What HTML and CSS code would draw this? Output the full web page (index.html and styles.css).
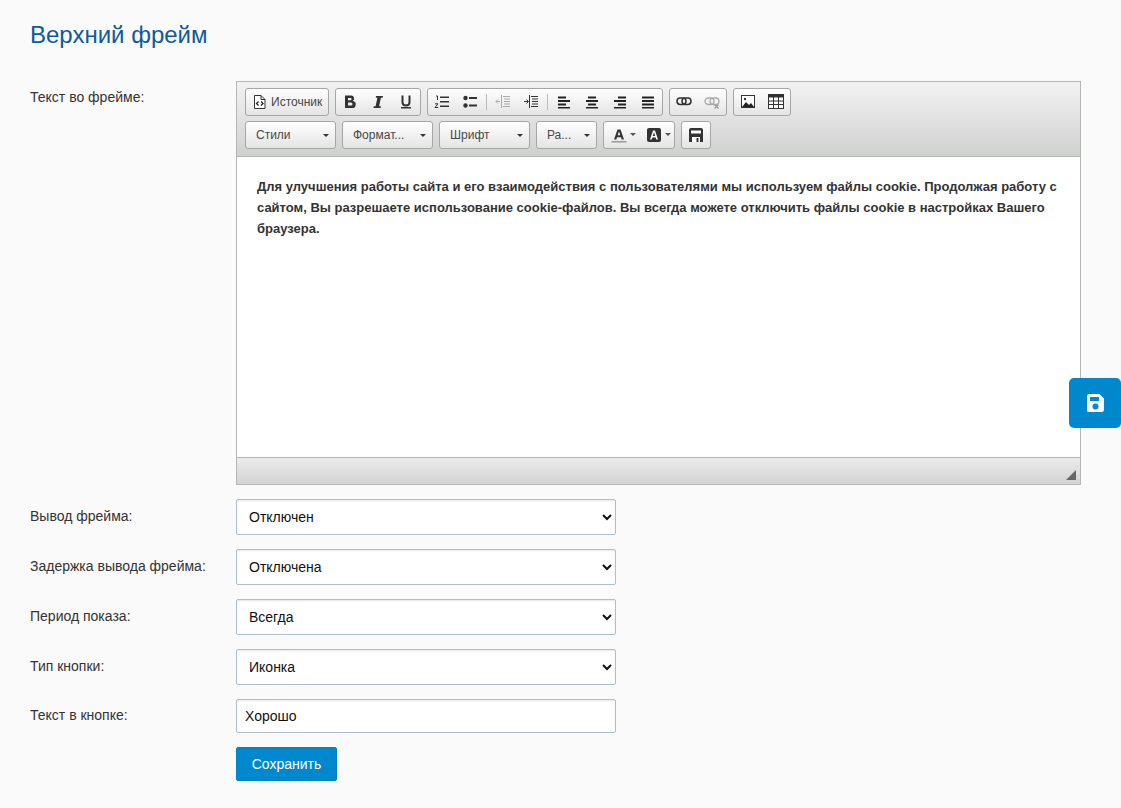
FILE: index.html
```html
<!DOCTYPE html>
<html lang="ru">
<head>
    <meta charset="UTF-8">
    <meta name="viewport" content="width=device-width, initial-scale=1.0">
    <title>Верхний фрейм</title>
    <link rel="stylesheet" href="styles.css">
</head>
<body>
    <h1>Верхний фрейм</h1>
    <form class="settings">
        <div class="row row-editor">
            <label>Текст во фрейме:</label>
            <div class="editor">
                <div class="toolbar">
                    <div class="tool-line">
                        <div class="group">
                            <span class="btn btn-source">
                                <svg width="16" height="16" viewBox="0 0 16 16"><path d="M2.500 1.500h6.500l4 4v9h-10.500z" fill="#fff" stroke="#333"/><path d="M9 1.500v4h4" fill="none" stroke="#333"/><path d="M6.500 7.500l-2 2 2 2M9 7.500l2 2-2 2" fill="none" stroke="#222" stroke-width="1.300"/></svg>
                                Источник
                            </span>
                        </div>
                        <div class="group">
                            <span class="btn"><svg width="16" height="16" viewBox="0 0 16 16"><path d="M3 1.500h6a3 3 0 0 1 1.800 5.500A3.400 3.400 0 0 1 9.500 14H3zM6 4v2.200h2.500a1.100 1.100 0 0 0 0-2.200zM6 8.500v3h3a1.500 1.500 0 0 0 0-3z" fill="#333" fill-rule="evenodd"/></svg></span>
                            <span class="btn"><svg width="16" height="16" viewBox="0 0 16 16"><path d="M6 2h7l-.3 1.700h-1.800l-1.800 8.600h1.800l-.3 1.700H3.500l.3-1.700h1.800l1.800-8.600H5.700z" fill="#333"/></svg></span>
                            <span class="btn"><svg width="16" height="16" viewBox="0 0 16 16"><path d="M4.500 1.500v6.800c0 2 1.500 3.200 3.500 3.200s3.500-1.200 3.500-3.200V1.500" fill="none" stroke="#333" stroke-width="2"/><path d="M3 13h10v1.500H3z" fill="#333"/></svg></span>
                        </div>
                        <div class="group">
                            <span class="btn"><svg width="16" height="16" viewBox="0 0 16 16"><path d="M6 2.500h9v1.500H6zM6 7h9v1.500H6zM6 11.500h9V13H6z" fill="#333"/><path d="M2 2h1.500v4M1 9.800h3l-3 3.700h3.200" fill="none" stroke="#333"/></svg></span>
                            <span class="btn"><svg width="16" height="16" viewBox="0 0 16 16"><path d="M7 3h8v2H7zM7 10.500h8v2H7z" fill="#333"/><circle cx="3.500" cy="4" r="2.200" fill="#333"/><circle cx="3.500" cy="11.500" r="2.200" fill="#333"/></svg></span>
                            <i class="sep"></i>
                            <span class="btn"><svg width="16" height="16" viewBox="0 0 16 16"><path d="M8 2.500h7M9 5h6M9 7.500h6M9 10h6M8 12.500h7M6.500 1v13" stroke="#aaa" fill="none"/><path d="M5 7.500H1M3 5.500l-2 2 2 2" stroke="#aaa" fill="none"/></svg></span>
                            <span class="btn"><svg width="16" height="16" viewBox="0 0 16 16"><path d="M8 2.500h7M9 5h6M9 7.500h6M9 10h6M8 12.500h7M6.500 1v13" stroke="#333" fill="none"/><path d="M1 7.500h4M3.500 5.500l2 2-2 2" stroke="#333" fill="none"/></svg></span>
                            <i class="sep"></i>
                            <span class="btn"><svg width="16" height="16" viewBox="0 0 16 16"><path d="M2 2.500h8v2H2zM2 6h12v2H2zM2 9.500h8v2H2zM2 13h12v1.500H2z" fill="#222"/></svg></span>
                            <span class="btn"><svg width="16" height="16" viewBox="0 0 16 16"><path d="M4 2.500h8v2H4zM2 6h12v2H2zM4 9.500h8v2H4zM2 13h12v1.500H2z" fill="#222"/></svg></span>
                            <span class="btn"><svg width="16" height="16" viewBox="0 0 16 16"><path d="M6 2.500h8v2H6zM2 6h12v2H2zM6 9.500h8v2H6zM2 13h12v1.500H2z" fill="#222"/></svg></span>
                            <span class="btn"><svg width="16" height="16" viewBox="0 0 16 16"><path d="M2 2.500h12v2H2zM2 6h12v2H2zM2 9.500h12v2H2zM2 13h12v1.500H2z" fill="#222"/></svg></span>
                        </div>
                        <div class="group">
                            <span class="btn"><svg width="16" height="16" viewBox="0 0 16 16"><rect x="1" y="4" width="9" height="6.500" rx="3.200" fill="none" stroke="#333" stroke-width="1.500"/><rect x="6" y="4" width="9" height="6.500" rx="3.200" fill="none" stroke="#333" stroke-width="1.500"/></svg></span>
                            <span class="btn"><svg width="16" height="16" viewBox="0 0 16 16"><rect x="1" y="4" width="9" height="6.500" rx="3.200" fill="none" stroke="#aaa" stroke-width="1.300"/><rect x="6" y="4" width="9" height="6.500" rx="3.200" fill="none" stroke="#aaa" stroke-width="1.300"/><path d="M10.500 10.500l4 4M14.500 10.500l-4 4" stroke="#999" stroke-width="1.300"/></svg></span>
                        </div>
                        <div class="group">
                            <span class="btn"><svg width="16" height="16" viewBox="0 0 16 16"><rect x="1.500" y="1.500" width="13" height="12" fill="#fff" stroke="#333"/><path d="M2 13l4-5 3 3 2-2 3 4z" fill="#222"/><circle cx="5" cy="5" r="1.200" fill="#333"/></svg></span>
                            <span class="btn"><svg width="16" height="16" viewBox="0 0 16 16"><rect x="0.500" y="0.500" width="15" height="14" fill="#fff" stroke="#333"/><path d="M0.500 0.500h15v3h-15z" fill="#333"/><path d="M5.500 3v11M10.500 3v11M0.500 7h15M0.500 10.500h15" stroke="#333" fill="none"/></svg></span>
                        </div>
                    </div>
                    <div class="tool-line">
                        <span class="combo combo-wide">Стили<b class="caret"></b></span>
                        <span class="combo combo-wide">Формат...<b class="caret"></b></span>
                        <span class="combo combo-wide">Шрифт<b class="caret"></b></span>
                        <span class="combo combo-size">Ра...<b class="caret"></b></span>
                        <div class="group group-color">
                            <span class="btn-color">
                                <svg width="16" height="16" viewBox="0 0 16 16"><path d="M3 12.500L6.500 2.500h3L13 12.500h-2.300l-.7-2.200H6l-.7 2.200zM6.700 8.300h2.600L8 4.500z" fill="#333" fill-rule="evenodd"/><path d="M0.500 14h15v1.500H0.500z" fill="#999"/></svg>
                                <b class="caret caret-small"></b>
                            </span>
                            <span class="btn-color">
                                <svg width="16" height="16" viewBox="0 0 16 16"><rect x="1" y="1" width="14" height="14" rx="2" fill="#333"/><path d="M4 12.500l3-9h2l3 9h-1.700l-.6-2H6.300l-.6 2zM6.800 9h2.400L8 5.200z" fill="#fff" fill-rule="evenodd"/></svg>
                                <b class="caret caret-small"></b>
                            </span>
                        </div>
                        <div class="group">
                            <span class="btn"><svg width="16" height="16" viewBox="0 0 16 16"><path d="M1 3a2 2 0 0 1 2-2h10a2 2 0 0 1 2 2v12H1z" fill="#333"/><path d="M3 3.500h10v3H3zM4 10h8v5H4z" fill="#fff"/><path d="M8.500 11h2v4h-2z" fill="#333"/></svg></span>
                        </div>
                    </div>
                </div>
                <div class="content">
                    <p>Для улучшения работы сайта и его взаимодействия с пользователями мы используем файлы cookie. Продолжая работу с сайтом, Вы разрешаете использование cookie-файлов. Вы всегда можете отключить файлы cookie в настройках Вашего браузера.</p>
                </div>
                <div class="editor-bottom"><i class="resizer"></i></div>
            </div>
        </div>
        <div class="row">
            <label for="show">Вывод фрейма:</label>
            <select id="show"><option>Отключен</option></select>
        </div>
        <div class="row">
            <label for="delay">Задержка вывода фрейма:</label>
            <select id="delay"><option>Отключена</option></select>
        </div>
        <div class="row">
            <label for="period">Период показа:</label>
            <select id="period"><option>Всегда</option></select>
        </div>
        <div class="row">
            <label for="type">Тип кнопки:</label>
            <select id="type"><option>Иконка</option></select>
        </div>
        <div class="row">
            <label for="text">Текст в кнопке:</label>
            <input type="text" id="text" value="Хорошо">
        </div>
        <div class="row">
            <span></span>
            <button type="button" class="submit">Сохранить</button>
        </div>
    </form>
    <a class="float-save">
        <svg width="22" height="22" viewBox="0 0 22 22"><path d="M3 4.500A2.500 2.500 0 0 1 5.500 2h10L20 6.500v11a2.500 2.500 0 0 1-2.500 2.500h-13A1.500 1.500 0 0 1 3 18.500z" fill="#fff"/><path d="M6 5h9v4H6z" fill="#0088cf"/><circle cx="11.500" cy="14.500" r="3" fill="#0088cf"/></svg>
    </a>
</body>
</html>
```

FILE: styles.css
```css
body {
    margin: 0;
    padding: 0 40px 27px 30px;
    background: #fafafa;
    font-family: "Liberation Sans", Arial, sans-serif;
    font-size: 14px;
    color: #333;
}
h1 {
    margin: 0;
    padding-top: 21px;
    height: 81px;
    box-sizing: border-box;
    font-size: 24px;
    line-height: 28px;
    font-weight: normal;
    color: #0f5a9c;
}
.settings {
    display: flex;
    flex-direction: column;
    gap: 14px;
}
.row {
    display: grid;
    grid-template-columns: 206px 380px;
    align-items: center;
}
.row label {
    font-size: 14px;
    color: #333;
    padding-bottom: 3px;
}
.row-editor {
    grid-template-columns: 206px 845px;
    align-items: start;
}
.row-editor label {
    padding-top: 8px;
}
select {
    height: 36px;
    padding: 0 8px;
    background: #fff;
    border: 1px solid #b0bfcb;
    border-radius: 2px;
    font-family: inherit;
    font-size: 14px;
    color: #111;
    box-shadow: inset 0 1px 2px rgba(0,0,0,0.1);
}
input {
    height: 34px;
    padding: 0 8px;
    box-sizing: border-box;
    background: #fff;
    border: 1px solid #b0bfcb;
    border-radius: 2px;
    font-family: inherit;
    font-size: 14px;
    color: #111;
    box-shadow: inset 0 1px 2px rgba(0,0,0,0.1);
}
.submit {
    justify-self: start;
    width: 101px;
    height: 34px;
    padding: 0;
    background: #0088cf;
    border: 1px solid #0081c5;
    border-radius: 2px;
    font-family: inherit;
    font-size: 14px;
    color: #fff;
}
.editor {
    height: 404px;
    box-sizing: border-box;
    display: flex;
    flex-direction: column;
    border: 1px solid #b6b6b6;
    background: #fff;
}
.toolbar {
    height: 75px;
    box-sizing: border-box;
    padding: 6px 8px 0;
    background: linear-gradient(to bottom, #f2f2f2, #cfd1cf);
    border-bottom: 1px solid #b6b6b6;
    display: flex;
    flex-direction: column;
    gap: 5px;
}
.tool-line {
    display: flex;
    gap: 6px;
    height: 28px;
}
.group {
    display: flex;
    align-items: center;
    height: 28px;
    box-sizing: border-box;
    border: 1px solid #a6a6a6;
    border-radius: 3px;
    background: linear-gradient(to bottom, #fff, #e4e4e4);
}
.btn {
    display: flex;
    align-items: center;
    justify-content: center;
    width: 28px;
    height: 26px;
    font-size: 12px;
    color: #474747;
}
.btn-source {
    width: 82px;
    box-sizing: border-box;
    justify-content: flex-start;
    gap: 3px;
    padding-left: 6px;
    white-space: nowrap;
}
.sep {
    width: 1px;
    height: 16px;
    background: #bcbcbc;
    margin: 0 2px;
}
.combo {
    position: relative;
    display: block;
    height: 28px;
    box-sizing: border-box;
    padding-left: 10px;
    border: 1px solid #a6a6a6;
    border-radius: 3px;
    background: linear-gradient(to bottom, #fff, #e4e4e4);
    font-size: 12px;
    line-height: 26px;
    color: #484848;
}
.combo-wide {
    width: 91px;
}
.combo-size {
    width: 61px;
}
.caret {
    position: absolute;
    right: 6px;
    top: 12px;
    border-top: 3px solid #333;
    border-left: 3px solid transparent;
    border-right: 3px solid transparent;
}
.group-color {
    width: 72px;
}
.btn-color {
    position: relative;
    display: flex;
    align-items: center;
    width: 35px;
    height: 26px;
    box-sizing: border-box;
    padding-left: 7px;
}
.caret-small {
    right: 3px;
    top: 11px;
    border-top-color: #555;
}
.content {
    flex: 1;
    padding: 19px 20px 0;
}
.content p {
    margin: 0;
    font-size: 13px;
    font-weight: bold;
    line-height: 21px;
    color: #333;
}
.editor-bottom {
    position: relative;
    height: 27px;
    box-sizing: border-box;
    border-top: 1px solid #b6b6b6;
    background: linear-gradient(to bottom, #ebebeb, #d3d3d3);
}
.resizer {
    position: absolute;
    right: 4px;
    bottom: 4px;
    border-bottom: 10px solid #666;
    border-left: 10px solid transparent;
}
.float-save {
    position: absolute;
    top: 378px;
    right: 0;
    display: flex;
    align-items: center;
    justify-content: center;
    width: 52px;
    height: 50px;
    background: #0088cf;
    border-radius: 5px;
}
```
